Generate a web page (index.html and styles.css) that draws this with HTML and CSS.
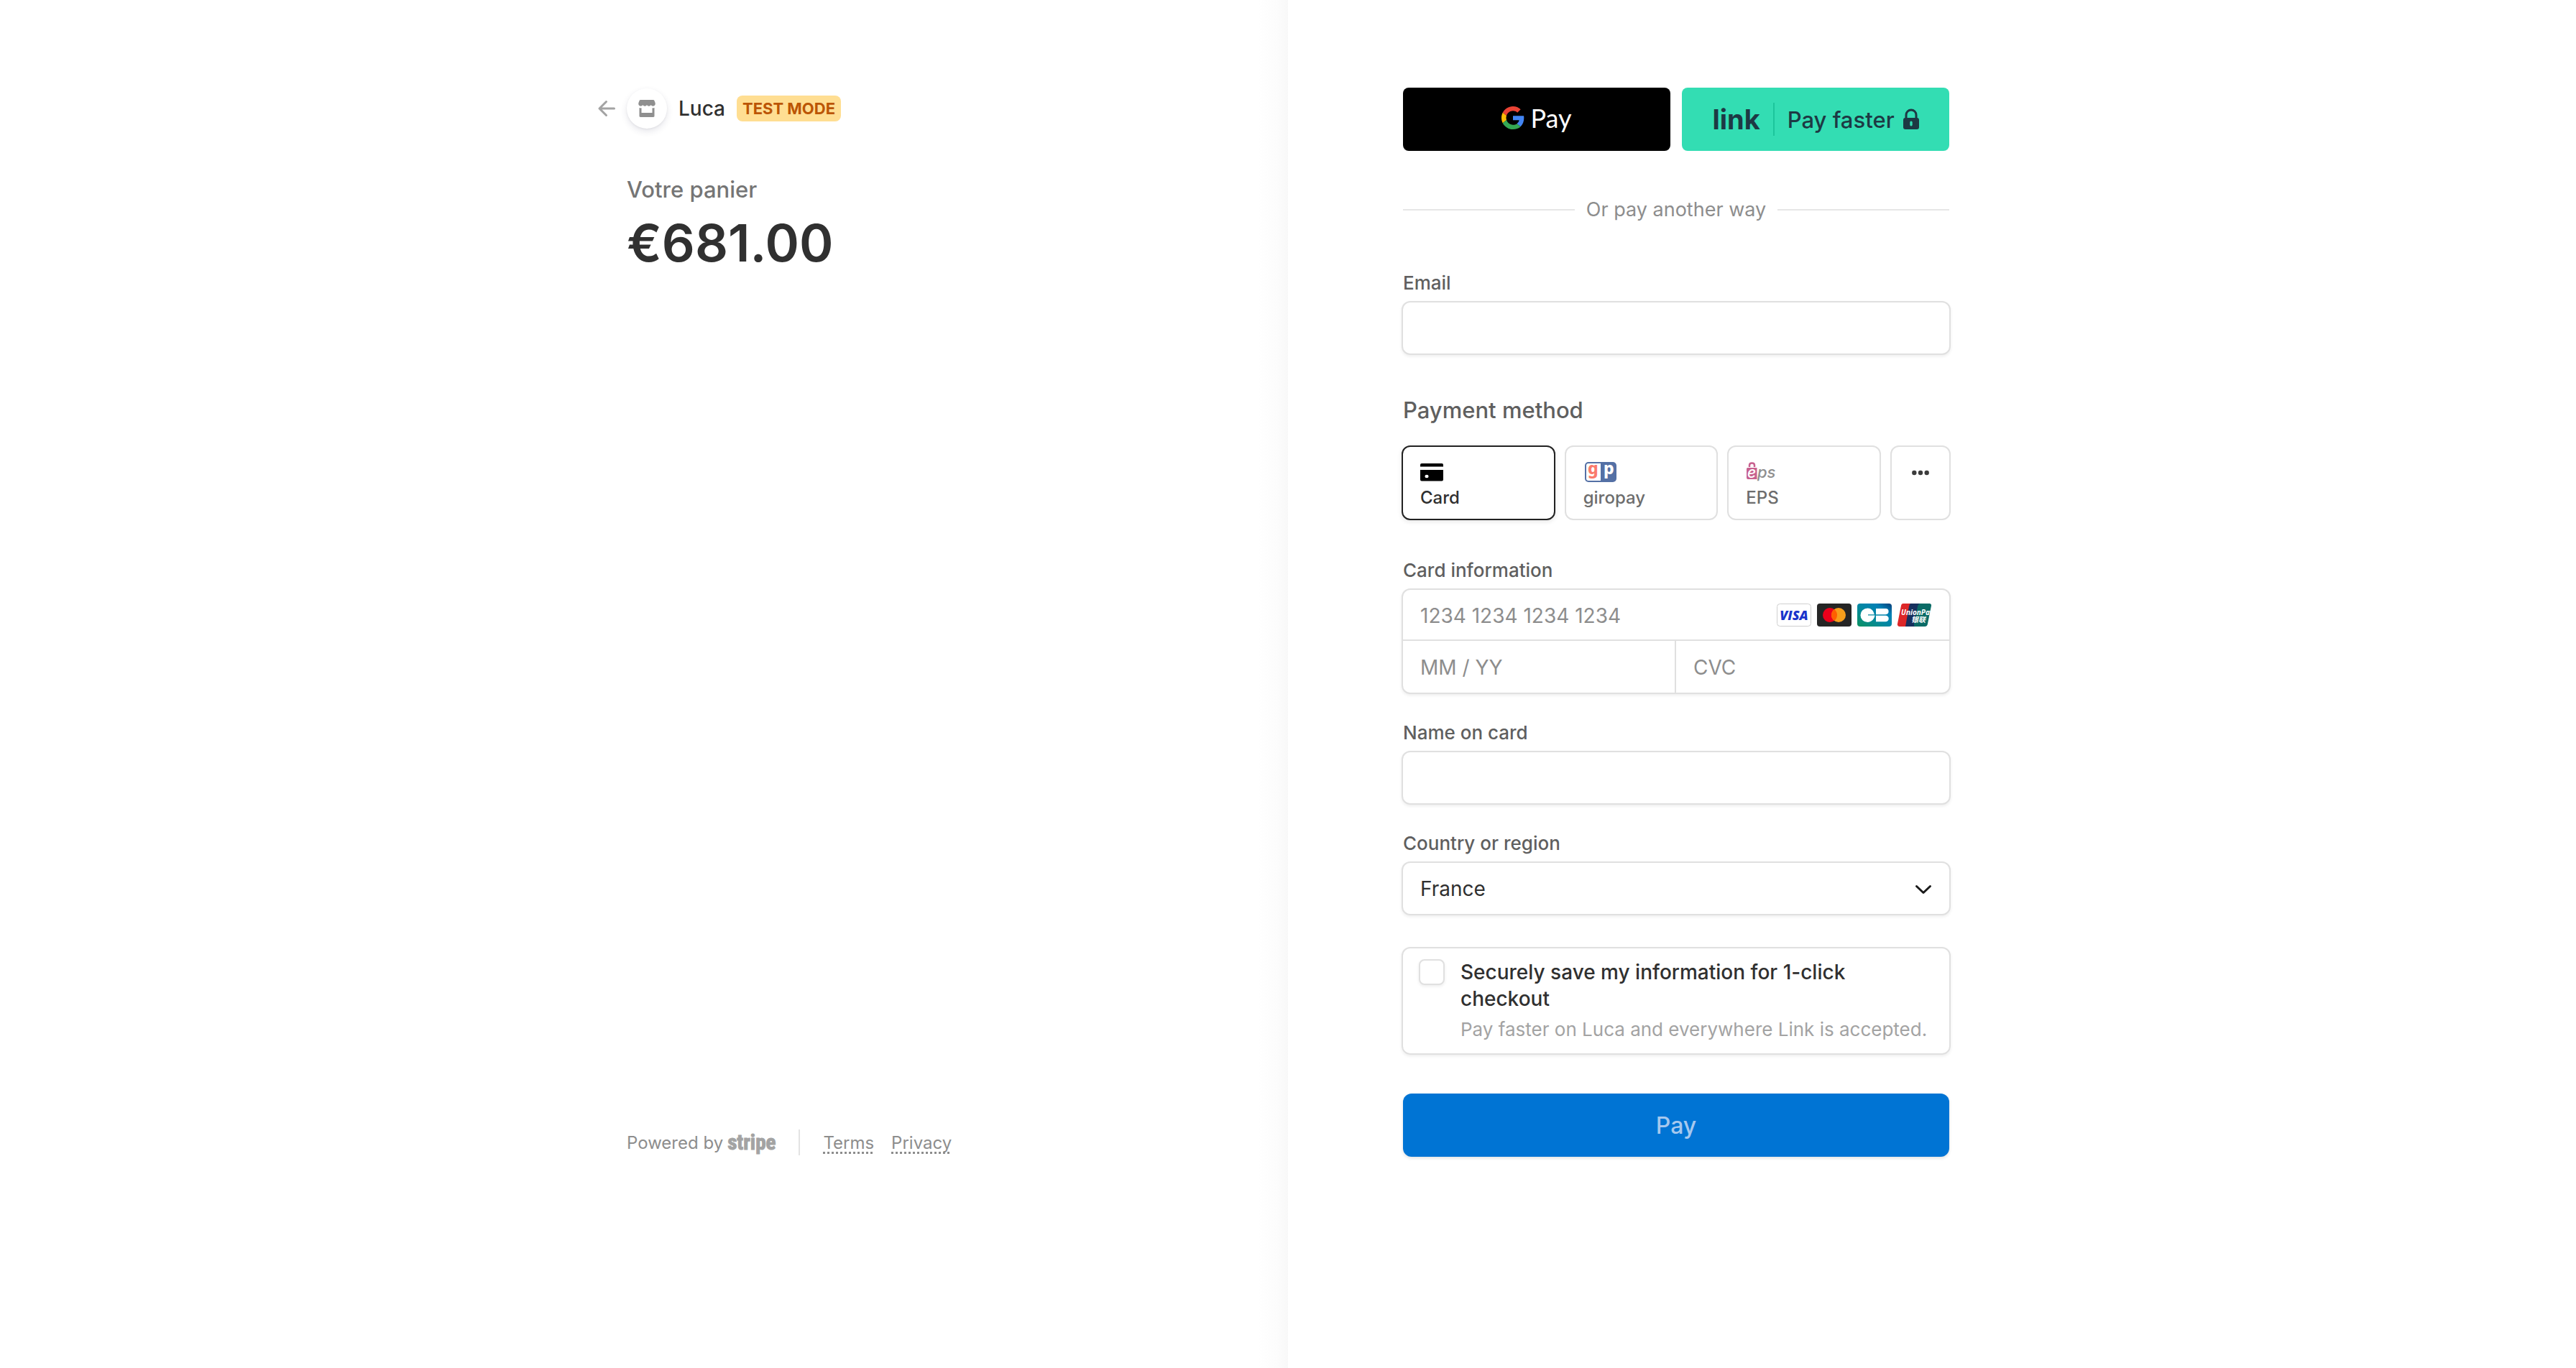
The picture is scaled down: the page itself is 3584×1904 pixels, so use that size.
FILE: index.html
```html
<!DOCTYPE html>
<html lang="en">
<head>
<meta charset="utf-8">
<meta name="viewport" content="width=device-width, initial-scale=1">
<title>Luca</title>
<link rel="stylesheet" href="styles.css">
</head>
<body>
<div class="checkout">
  <section class="pane pane-summary">
    <div class="column summary">
      <header class="merchant">
        <a class="back" href="#" aria-label="Back">
          <svg width="24" height="24" viewBox="0 0 24 24" fill="none" stroke="#a3a3a3" stroke-width="3" stroke-linecap="round" stroke-linejoin="round"><path d="M22.500 12H2M11.500 2.500L2 12l9.500 9.500"/></svg>
        </a>
        <span class="avatar">
          <svg width="24" height="24" viewBox="0 0 24 24" fill="#8f8f8f"><path d="M3.500 0h17c1 0 1.600.4 2 1.200L23.700 4.500c.3 2.300-1 4.200-3 4.200-1.400 0-2.400-.7-3-1.700-.6 1-1.600 1.700-2.900 1.700S12.600 8 12 7c-.6 1-1.500 1.700-2.800 1.700S6.900 8 6.300 7c-.6 1-1.600 1.700-3 1.700-2 0-3.300-1.900-3-4.200L1.500 1.200C1.900.4 2.500 0 3.500 0z"/><path d="M1.500 11c.9.400 2 .5 3 .3V18h15v-6.700c1 .2 2.100.1 3-.3v11.300c0 1-.5 1.700-1.500 1.700H3c-1 0-1.500-.7-1.500-1.700z"/></svg>
        </span>
        <span class="merchant-name">Luca</span>
        <span class="badge">TEST MODE</span>
      </header>
      <h1 class="cart-title">Votre panier</h1>
      <p class="cart-total">€681.00</p>
      <footer class="footer">
        <span class="powered">Powered by <span class="stripe">stripe</span></span>
        <span class="footer-rule"></span>
        <a class="footer-link" href="#">Terms</a>
        <a class="footer-link" href="#">Privacy</a>
      </footer>
    </div>
  </section>

  <main class="pane pane-payment">
    <form class="column payment">
      <div class="wallets">
        <button class="wallet gpay" type="button" aria-label="Google Pay">
          <svg width="32" height="32" viewBox="0 0 48 48"><path fill="#EA4335" d="M24 9.500c3.540 0 6.710 1.220 9.210 3.600l6.850-6.850C35.900 2.380 30.470 0 24 0 14.620 0 6.510 5.380 2.560 13.220l7.980 6.190C12.430 13.720 17.740 9.500 24 9.500z"/><path fill="#4285F4" d="M46.980 24.550c0-1.570-.15-3.090-.38-4.550H24v9.020h12.940c-.58 2.960-2.260 5.480-4.780 7.180l7.730 6c4.510-4.180 7.090-10.360 7.090-17.650z"/><path fill="#FBBC05" d="M10.530 28.590c-.48-1.450-.76-2.990-.76-4.590s.27-3.140.76-4.590l-7.980-6.190C.92 16.460 0 20.120 0 24c0 3.880.92 7.540 2.560 10.780l7.970-6.190z"/><path fill="#34A853" d="M24 48c6.480 0 11.930-2.130 15.890-5.810l-7.730-6c-2.150 1.450-4.920 2.300-8.160 2.300-6.260 0-11.570-4.220-13.470-9.910l-7.980 6.190C6.510 42.620 14.620 48 24 48z"/></svg>
          <span class="gpay-text">Pay</span>
        </button>
        <button class="wallet link" type="button">
          <span class="link-logo">link</span>
          <span class="link-rule"></span>
          <span class="link-text">Pay faster</span>
          <svg class="lock" width="22" height="28" viewBox="0 0 22 28"><path d="M4 13V8a7 7 0 0 1 14 0v5" fill="none" stroke="#1d3944" stroke-width="3"/><path fill="#1d3944" fill-rule="evenodd" d="M3 12h16a3 3 0 0 1 3 3v10a3 3 0 0 1-3 3H3a3 3 0 0 1-3-3V15a3 3 0 0 1 3-3zm8 4.500a1.700 1.700 0 0 0-1.700 1.700v3.600a1.700 1.700 0 0 0 3.400 0v-3.600A1.700 1.700 0 0 0 11 16.500z"/></svg>
        </button>
      </div>

      <div class="separator"><span>Or pay another way</span></div>

      <div class="field">
        <label for="email">Email</label>
        <input class="box" id="email" type="email">
      </div>

      <h2 class="method-title">Payment method</h2>
      <div class="methods">
        <button class="method selected" type="button">
          <span class="method-icon"><svg width="32" height="28" viewBox="0 0 32 28"><path d="M2 2h28a2 2 0 0 1 2 2v2.500H0V4a2 2 0 0 1 2-2z"/><path fill-rule="evenodd" d="M0 11h32v13.500a2 2 0 0 1-2 2H2a2 2 0 0 1-2-2zm9 6.800a2.600 2.200 0 1 0 0 4.400 2.600 2.200 0 0 0 0-4.400z"/></svg></span>
          <span>Card</span>
        </button>
        <button class="method" type="button">
          <span class="method-icon"><svg width="46" height="28" viewBox="0 0 46 28"><rect x="2" width="44" height="28" rx="5" fill="#5470a5"/><path d="M7 2h17v24H7a3 3 0 0 1-3-3V5a3 3 0 0 1 3-3z" fill="#fff"/><text x="6" y="17" font-family="Noto Sans, sans-serif" font-size="23" font-weight="800" fill="#fa7a6c">g</text><text x="28" y="17" font-family="Noto Sans, sans-serif" font-size="23" font-weight="800" fill="#fff">p</text></svg></span>
          <span>giropay</span>
        </button>
        <button class="method" type="button">
          <span class="method-icon"><svg width="44" height="28" viewBox="0 0 44 28"><path d="M5 7V4.500Q5 1.500 8.500 1.500T12 4.500V7" fill="none" stroke="#c8618f" stroke-width="2.500"/><path d="M2.500 8h13v16H3a2 2 0 0 1-2-2V9.500A1.500 1.500 0 0 1 2.500 8z" fill="#c8618f"/><text x="2" y="22" font-family="Inter, sans-serif" font-size="21" font-weight="500" font-style="italic" fill="#fff">e</text><text x="16" y="22" font-family="Inter, sans-serif" font-size="22" font-weight="500" font-style="italic" fill="#8f8f8f">ps</text></svg></span>
          <span>EPS</span>
        </button>
        <button class="method more" type="button" aria-label="More payment methods">
          <span class="method-icon"><svg width="24" height="28" viewBox="0 0 24 28" fill="#3c3c3c"><circle cx="3.300" cy="15" r="3.200"/><circle cx="12" cy="15" r="3.200"/><circle cx="20.700" cy="15" r="3.200"/></svg></span>
        </button>
      </div>

      <fieldset class="field card-field">
        <legend>Card information</legend>
        <div class="box card-box">
          <div class="card-number">
            <input type="text" placeholder="1234 1234 1234 1234" aria-label="Card number">
            <svg width="48" height="32" viewBox="0 0 48 32"><rect x=".5" y=".5" width="47" height="31" rx="4" fill="#fff" stroke="#cfcfcf"/><text x="24" y="23" text-anchor="middle" font-family="Open Sans, sans-serif" font-size="18" font-weight="800" font-style="italic" fill="#1a34cb">VISA</text></svg>
            <svg width="48" height="32" viewBox="0 0 48 32"><rect width="48" height="32" rx="4" fill="#252525"/><circle cx="18" cy="16" r="10" fill="#eb001b"/><circle cx="30" cy="16" r="10" fill="#f79e1b"/><path d="M24 8a10 10 0 0 1 0 16 10 10 0 0 1 0-16z" fill="#ff5f00"/></svg>
            <svg width="48" height="32" viewBox="0 0 48 32"><defs><linearGradient id="cb" x1="0" y1="1" x2="1" y2="0"><stop offset="0" stop-color="#0c9260"/><stop offset=".45" stop-color="#0488a0"/><stop offset=".75" stop-color="#0080b5"/><stop offset="1" stop-color="#083c78"/></linearGradient></defs><rect width="48" height="32" rx="4" fill="url(#cb)"/><path fill="#fff" d="M14.500 6.500c4.500 0 8 2.800 9.300 8.700H15v1.400h9.500C23.500 22.800 19 26 14.500 26A10 9.700 0 0 1 14.500 6.500zM26 7h13.500a4 4 0 0 1 0 8.200H26zM26 16.800h13.500a4.200 4.200 0 0 1 0 8.500H26z"/></svg>
            <svg width="48" height="32" viewBox="0 0 48 32"><path fill="#dd2728" d="M8 0h11L13 32H3a3 3 0 0 1-3-4L5 3q.5-3 3-3z"/><path fill="#17305e" d="M18 0h14l-6 32H11l5-28q.5-3 2-4z"/><path fill="#0a6b66" d="M31 0h13.500a2.500 2.500 0 0 1 2.500 3.200L41.800 29a4 4 0 0 1-4 3H24q-1.500-1-1-4l5-24q.5-3 3-4z"/><text x="5" y="16" font-family="Liberation Sans Narrow, Open Sans, sans-serif" font-size="10" font-weight="700" font-style="italic" fill="#fff">UnionPay</text><text x="19" y="26" font-family="Noto Sans CJK SC, sans-serif" font-size="10" font-weight="700" font-style="italic" fill="#fff">银联</text></svg>
          </div>
          <div class="card-extra">
            <input type="text" placeholder="MM / YY" aria-label="Expiration">
            <input type="text" placeholder="CVC" aria-label="CVC">
          </div>
        </div>
      </fieldset>

      <div class="field">
        <label for="name">Name on card</label>
        <input class="box" id="name" type="text">
      </div>

      <div class="field">
        <label for="country">Country or region</label>
        <div class="select-wrap">
          <select class="box" id="country"><option>France</option></select>
          <svg class="chevron" width="24" height="14" viewBox="0 0 24 14" fill="none" stroke="#1a1a1a" stroke-width="3" stroke-linecap="round" stroke-linejoin="round"><path d="M2.500 2.500L12 11.500l9.500-9"/></svg>
        </div>
      </div>

      <div class="save">
        <input id="save" type="checkbox">
        <label for="save"><span class="save-title">Securely save my information for 1-click checkout</span><span class="save-note">Pay faster on Luca and everywhere Link is accepted.</span></label>
      </div>

      <button class="submit" type="submit">Pay</button>
    </form>
  </main>
</div>
</body>
</html>
```
FILE: styles.css
```css
* { box-sizing: border-box; }

body {
  margin: 0;
  background: #fff;
  color: #303030;
  font-family: Inter, "Liberation Sans", sans-serif;
  font-size: 26px;
}

button, input, select { font: inherit; color: inherit; }
button { cursor: pointer; border: 0; padding: 0; }
h1, h2, p, fieldset, legend { margin: 0; padding: 0; border: 0; }
svg { display: block; flex: none; overflow: visible; }

/* Two halves; the left one is shaded towards the middle down the whole window */
.checkout {
  display: grid;
  grid-template-columns: 1fr 1fr;
  grid-template-rows: auto 1fr;
  min-height: 100vh;
}
.checkout::after { content: ""; grid-column: 1; }
.pane-summary, .checkout::after {
  background: linear-gradient(to left, #f8f8f8, #fcfcfc 14px, #fff 42px);
}
.pane { display: flex; padding: 122px 160px 0; }
.pane-summary { justify-content: flex-end; }
.column { width: 100%; max-width: 760px; }

/* Summary */
.summary { display: flex; flex-direction: column; }
.merchant { display: flex; align-items: center; margin-left: -40px; height: 58px; }
.back { margin-right: 16px; }
.avatar {
  display: flex;
  align-items: center;
  justify-content: center;
  width: 56px;
  height: 56px;
  border-radius: 50%;
  box-shadow: 0 4px 10px rgba(50, 50, 93, .12), 0 1px 3px rgba(0, 0, 0, .06);
}
.merchant-name { margin-left: 16px; font-size: 28px; font-weight: 500; }
.badge {
  margin-left: 16px;
  padding: 0 8px;
  border-radius: 8px;
  background: #ffde92;
  color: #bb5504;
  font-size: 22px;
  font-weight: 700;
  line-height: 36px;
}
.cart-title { margin-top: 64px; font-size: 31px; font-weight: 500; line-height: 40px; color: #757575; }
.cart-total { margin-top: 10px; font-size: 72px; font-weight: 600; line-height: 88px; }

.footer { display: flex; align-items: center; height: 40px; margin-top: auto; font-size: 24px; color: #8d8d8d; }
.powered { display: flex; align-items: center; gap: 6px; }
.stripe {
  font-family: "Liberation Sans Narrow", "Roboto Condensed", Roboto, sans-serif;
  font-size: 29px;
  font-weight: 700;
  line-height: 32px;
  color: #a3a3a3;
  -webkit-text-stroke: 1px #a3a3a3;
}
.footer-rule { width: 2px; height: 36px; margin: 0 32px; background: #e3e3e3; }
.footer-link { margin-right: 24px; color: inherit; text-decoration: underline dotted 3px; text-underline-offset: 4px; text-decoration-skip-ink: none; }

/* Wallet buttons */
.wallets { display: grid; grid-template-columns: 1fr 1fr; gap: 16px; }
.wallet { display: flex; align-items: center; justify-content: center; height: 88px; border-radius: 8px; }
.gpay { gap: 8px; padding-bottom: 4px; background: #000; color: #fff; }
.gpay-text { font-family: Lato, sans-serif; font-size: 36px; line-height: 44px; }
.link { background: #33ddb3; color: #1d3944; }
.link-logo { font-size: 38px; font-weight: 700; }
.link-rule { width: 2px; height: 46px; margin: 0 18px; background: #1cc59c; }
.link-text { font-size: 31px; font-weight: 500; }
.lock { margin-left: 12px; }

.separator { display: flex; align-items: center; gap: 16px; margin: 66px 0 70px; font-size: 27px; line-height: 32px; color: #8d8d8d; }
.separator::before, .separator::after { content: ""; flex: 1; height: 2px; background: #e6e6e6; }

/* Form fields; borders sit just outside the column */
.field { margin-bottom: 38px; }
.field label, .field legend { display: block; margin-bottom: 9px; font-weight: 500; line-height: 32px; color: #5f5f5f; }
.box {
  display: block;
  width: calc(100% + 4px);
  margin: 0 -2px;
  height: 75px;
  padding: 0 24px;
  border: 2px solid #e0e0e0;
  border-radius: 12px;
  background: #fff;
  font-size: 28px;
  box-shadow: 0 2px 4px rgba(0, 0, 0, .07);
}

.method-title { margin-top: 57px; font-size: 31px; font-weight: 500; line-height: 40px; color: #5f5f5f; }
.methods { display: flex; gap: 13px; margin: 29px -2px 54px; }
.method {
  flex: 1;
  display: flex;
  flex-direction: column;
  align-items: flex-start;
  gap: 8px;
  height: 104px;
  padding: 21px 24px 0;
  border: 2px solid #e0e0e0;
  border-radius: 12px;
  background: #fff;
  color: #6d6d6d;
  font-size: 24px;
  font-weight: 500;
  line-height: 28px;
}
.method.selected { border-color: #222; color: #303030; box-shadow: 0 2px 6px rgba(0, 0, 0, .1); }
.method.more { flex: 0 0 84px; align-items: center; }

.card-field { min-width: 0; }
.card-box { height: 147px; padding: 0; overflow: hidden; }
.card-number { display: flex; align-items: center; gap: 8px; height: 71px; padding-right: 24px; border-bottom: 2px solid #e0e0e0; }
.card-extra { display: grid; grid-template-columns: 1fr 1fr; height: 72px; }
.card-box input { flex: 1; min-width: 0; border: 0; background: none; padding: 2px 24px 0; outline: 0; }
.card-extra input:first-child { border-right: 2px solid #e0e0e0; }
::placeholder { color: #8d8d8d; opacity: 1; }

.select-wrap { position: relative; }
select.box { appearance: none; }
.chevron { position: absolute; right: 24px; top: 32px; }

.save {
  display: flex;
  align-items: flex-start;
  gap: 22px;
  margin: 44px -2px 54px;
  padding: 15px 16px 17px 22px;
  border: 2px solid #e0e0e0;
  border-radius: 12px;
  box-shadow: 0 2px 4px rgba(0, 0, 0, .07);
}
.save input {
  appearance: none;
  flex: none;
  width: 36px;
  height: 36px;
  margin: 0;
  border: 2px solid #e0e0e0;
  border-radius: 8px;
  background: #fff;
  box-shadow: 0 2px 4px rgba(0, 0, 0, .07);
}
.save-title, .save-note { display: block; }
.save-title { font-size: 28px; font-weight: 500; line-height: 37px; }
.save-note { margin-top: 8px; line-height: 32px; color: #a3a3a3; }

.submit {
  display: block;
  width: 100%;
  height: 88px;
  border-radius: 12px;
  background: #0074d4;
  color: #a6c8ee;
  font-size: 32px;
  font-weight: 500;
  box-shadow: 0 2px 4px rgba(0, 0, 0, .12);
}
```
